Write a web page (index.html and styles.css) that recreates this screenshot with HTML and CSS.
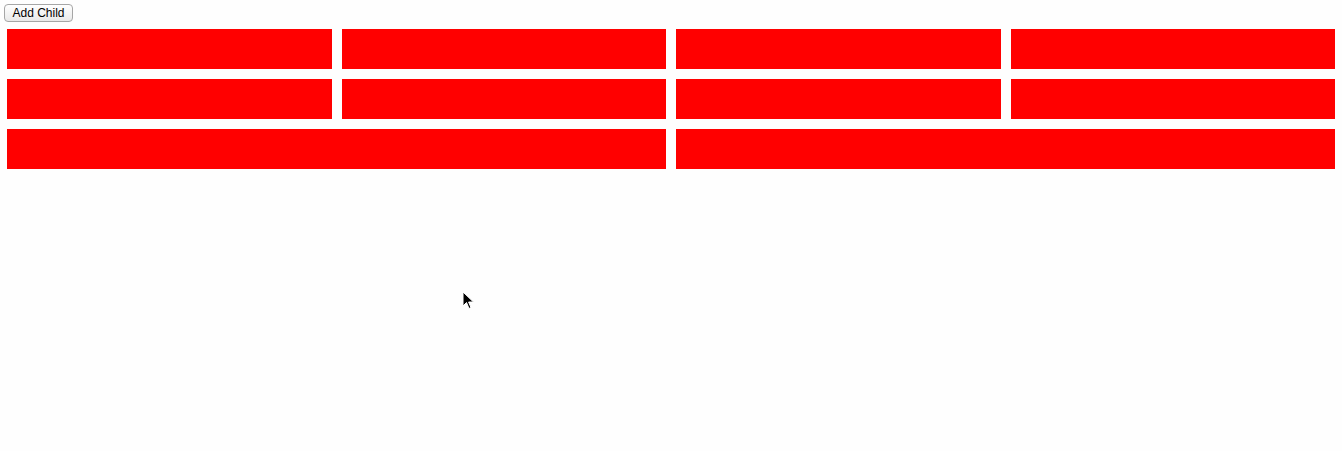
FILE: index.html
```html
<!DOCTYPE html>
<html>
<head>
<meta charset="utf-8">
<link rel="stylesheet" href="styles.css">
</head>
<body>
<div class="page">
  <button class="add-btn">Add Child</button>
  <div class="rows">
    <div class="row four">
      <div class="box"></div><div class="box"></div><div class="box"></div><div class="box"></div>
    </div>
    <div class="row four">
      <div class="box"></div><div class="box"></div><div class="box"></div><div class="box"></div>
    </div>
    <div class="row two">
      <div class="box"></div><div class="box"></div>
    </div>
  </div>
</div>
<svg class="cursor" width="14" height="20" viewBox="0 0 14 20">
  <path d="M1 1 L1 15 L4.5 11.5 L7 17.5 L9 16.6 L6.6 11 L11.5 11 Z" fill="#000" stroke="#fff" stroke-width="1"/>
</svg>
</body>
</html>
```
FILE: styles.css
```css
html, body {
  margin: 0;
  padding: 0;
  background: #fefefe;
}
.page {
  padding: 4px 7px 0 7px;
}
.add-btn {
  display: block;
  margin-left: -3px;
  height: 18px;
  width: 69px;
  padding: 0;
  font-family: "Liberation Sans", Arial, sans-serif;
  font-size: 12px;
  color: #000;
  background: linear-gradient(#ffffff, #e9e9e9);
  border: 1px solid #a6a6a6;
  border-radius: 4px;
  line-height: 16px;
}
.rows {
  margin-top: 7px;
  display: flex;
  flex-direction: column;
  gap: 10px;
}
.row {
  display: grid;
  gap: 10px;
}
.row.four {
  grid-template-columns: repeat(4, 1fr);
}
.row.two {
  grid-template-columns: repeat(2, 1fr);
}
.box {
  height: 40px;
  background: #ff0000;
}
.cursor {
  position: absolute;
  left: 462px;
  top: 291px;
}
```
